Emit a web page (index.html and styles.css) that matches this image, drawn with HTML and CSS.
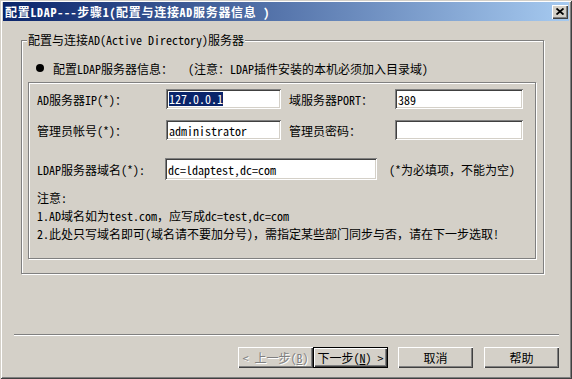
FILE: index.html
```html
<!DOCTYPE html>
<html>
<head>
    <meta charset="UTF-8">
    <title>配置LDAP---步骤1</title>
    <link rel="stylesheet" href="styles.css">
</head>
<body>
    <div class="window">
        <div class="titlebar">
            <span class="title">配置LDAP---步骤1(配置与连接AD服务器信息 )</span>
            <button class="close">
                <svg width="8" height="7" viewBox="0 0 8 7">
                    <path d="M0.5 0.5 L7.5 6.5 M7.5 0.5 L0.5 6.5" stroke="#000" stroke-width="1.8" fill="none"/>
                </svg>
            </button>
        </div>

        <fieldset class="group">
            <legend>配置与连接AD(Active Directory)服务器</legend>
            <div class="section-head">
                <span class="dot"></span>
                <span>配置LDAP服务器信息：</span>
                <span class="hint">(注意：LDAP插件安装的本机必须加入目录域)</span>
            </div>

            <div class="panel">
                <div class="row">
                    <span class="lbl">AD服务器IP(*)：</span>
                    <div class="edit w-ip"><span class="sel">127.0.0.1</span></div>
                    <span class="lbl2">域服务器PORT：</span>
                    <div class="edit w-port">389</div>
                </div>
                <div class="row">
                    <span class="lbl">管理员帐号(*)：</span>
                    <div class="edit w-ip">administrator</div>
                    <span class="lbl2">管理员密码：</span>
                    <div class="edit w-port"></div>
                </div>
                <div class="row row-domain">
                    <span class="lbl lbl-domain">LDAP服务器域名(*):</span>
                    <div class="edit w-domain">dc=ldaptest,dc=com</div>
                    <span class="required">(*为必填项，不能为空)</span>
                </div>
                <div class="notes">
                    <div>注意:</div>
                    <div>1.AD域名如为test.com，应写成dc=test,dc=com</div>
                    <div>2.此处只写域名即可(域名请不要加分号)，需指定某些部门同步与否，请在下一步选取!</div>
                </div>
            </div>
        </fieldset>

        <div class="sep"></div>

        <div class="buttons">
            <button class="btn" disabled>&lt; 上一步(<u>B</u>)</button>
            <button class="btn default">下一步(<u>N</u>) &gt;</button>
            <button class="btn cancel">取消</button>
            <button class="btn help">帮助</button>
        </div>
    </div>
</body>
</html>
```

FILE: styles.css
```css
* {
    margin: 0;
    padding: 0;
    box-sizing: border-box;
}

body {
    width: 572px;
    height: 379px;
    overflow: hidden;
    background: #d4d0c8;
    color: #000;
    font-family: "Noto Sans Mono CJK SC", "Noto Sans CJK SC", "DejaVu Sans Mono", monospace;
    font-size: 12px;
}

.window {
    height: 379px;
    display: flex;
    flex-direction: column;
    box-shadow: inset 1px 1px 0 #d4d0c8, inset -1px -1px 0 #404040,
                inset 2px 2px 0 #fff, inset -2px -2px 0 #808080;
}

.titlebar {
    height: 19px;
    margin: 2px 3px 0;
    display: flex;
    align-items: center;
    padding-left: 2px;
    background: linear-gradient(to right, #0a246a, #a6caf0);
    color: #fff;
    font-weight: bold;
    white-space: nowrap;
}

.title {
    letter-spacing: 0.7px;
}

.close {
    width: 16px;
    height: 14px;
    margin-left: auto;
    margin-right: 1px;
    border: none;
    background: #d4d0c8;
    display: flex;
    align-items: center;
    justify-content: center;
    box-shadow: inset 1px 1px 0 #fff, inset -1px -1px 0 #404040, inset -2px -2px 0 #808080;
}

.group {
    margin: 12px 28px 0 21px;
    border: 1px solid #808080;
    box-shadow: 1px 1px 0 #fff, inset 1px 1px 0 #fff;
    padding: 0;
}

.group legend {
    margin-left: 5px;
    padding: 0 1px;
    line-height: 14px;
    background: #d4d0c8;
}

.section-head {
    display: flex;
    align-items: center;
    height: 14px;
    margin: 14px 0 0 14px;
    white-space: nowrap;
}

.dot {
    width: 8px;
    height: 8px;
    border-radius: 50%;
    background: #000;
    margin-right: 9px;
}

.hint {
    margin-left: 15px;
}

.panel {
    margin: 7px 7px 14px 6px;
    border: 1px solid #808080;
    box-shadow: 1px 1px 0 #fff, inset 1px 1px 0 #fff;
    padding: 6px 0 15px 8px;
}

.row {
    display: flex;
    align-items: center;
    height: 20px;
    margin-bottom: 11px;
    white-space: nowrap;
}

.row-domain {
    height: 22px;
    margin-top: 18px;
    margin-bottom: 0;
}

.lbl {
    width: 129px;
}

.lbl-domain {
    width: 128px;
}

.lbl2 {
    width: 106px;
    margin-left: 8px;
}

.edit {
    height: 100%;
    display: flex;
    align-items: center;
    padding: 0 3px;
    background: #fff;
    box-shadow: inset 1px 1px 0 #808080, inset -1px -1px 0 #fff,
                inset 2px 2px 0 #404040, inset -2px -2px 0 #d4d0c8;
}

.w-ip { width: 115px; }
.w-port { width: 128px; }
.w-domain { width: 212px; }

.sel {
    background: #0a246a;
    color: #fff;
    line-height: 14px;
}

.required {
    margin-left: 12px;
}

.notes {
    margin-top: 9px;
    line-height: 18px;
    white-space: nowrap;
}

.sep {
    height: 2px;
    margin: 60px 13px 0 14px;
    border-top: 1px solid #808080;
    border-bottom: 1px solid #fff;
}

.buttons {
    display: flex;
    justify-content: flex-end;
    margin: 11px 13px 0 0;
}

.btn {
    width: 75px;
    height: 21px;
    border: none;
    background: #d4d0c8;
    font: inherit;
    color: #000;
    box-shadow: inset 1px 1px 0 #fff, inset -1px -1px 0 #404040, inset -2px -2px 0 #808080;
}

.btn:disabled {
    color: #808080;
    text-shadow: 1px 1px 0 #fff;
}

.btn.default {
    border: 1px solid #000;
}

.btn.cancel {
    margin-left: 10px;
}

.btn.help {
    margin-left: 11px;
}
```
